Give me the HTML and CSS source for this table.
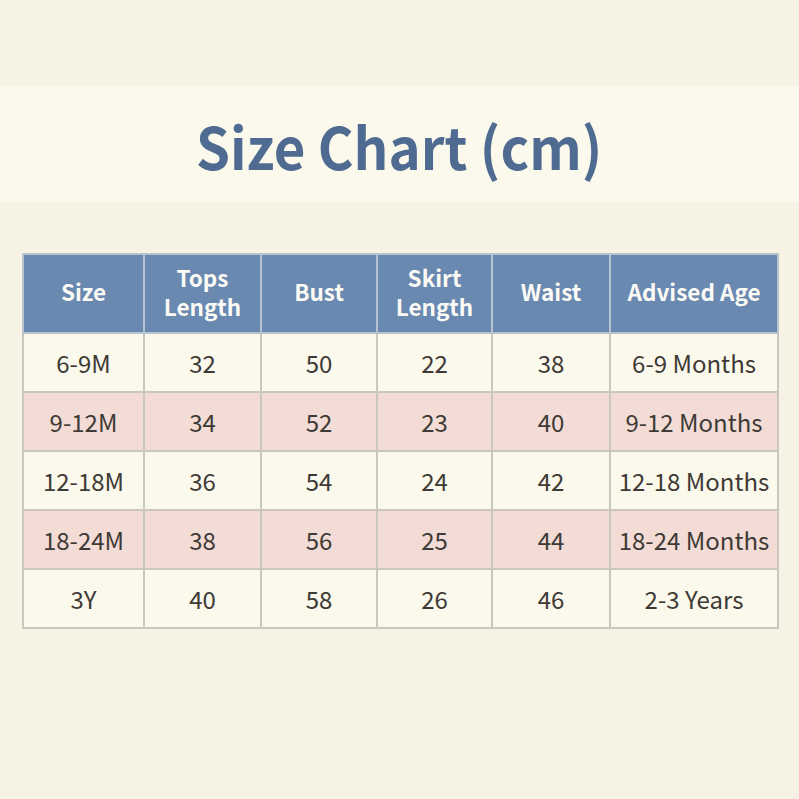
FILE: index.html
```html
<!DOCTYPE html>
<html>
<head>
<meta charset="utf-8">
<link rel="stylesheet" href="styles.css">
</head>
<body>
<div class="page">
  <div class="banner"><h1 class="title">Size Chart (cm)</h1></div>
  <table class="chart">
    <colgroup>
      <col style="width:121px"><col style="width:117px"><col style="width:116px"><col style="width:115px"><col style="width:118px"><col style="width:168px">
    </colgroup>
    <thead>
      <tr><th>Size</th><th>Tops<br>Length</th><th>Bust</th><th>Skirt<br>Length</th><th>Waist</th><th>Advised Age</th></tr>
    </thead>
    <tbody>
      <tr class="light"><td>6-9M</td><td>32</td><td>50</td><td>22</td><td>38</td><td>6-9 Months</td></tr>
      <tr class="pink"><td>9-12M</td><td>34</td><td>52</td><td>23</td><td>40</td><td>9-12 Months</td></tr>
      <tr class="light"><td>12-18M</td><td>36</td><td>54</td><td>24</td><td>42</td><td>12-18 Months</td></tr>
      <tr class="pink"><td>18-24M</td><td>38</td><td>56</td><td>25</td><td>44</td><td>18-24 Months</td></tr>
      <tr class="light"><td>3Y</td><td>40</td><td>58</td><td>26</td><td>46</td><td>2-3 Years</td></tr>
    </tbody>
  </table>
</div>
</body>
</html>
```
FILE: styles.css
```css
html, body {
  margin: 0;
  padding: 0;
  background: #f6f3e4;
}
.page {
  width: 799px;
  height: 799px;
  font-family: "Noto Sans CJK SC", "Source Sans Pro", "Noto Sans", sans-serif;
  overflow: hidden;
}
.banner {
  margin-top: 86px;
  height: 116px;
  background: #fbf8ec;
  display: flex;
  align-items: center;
  justify-content: center;
}
.title {
  margin: 0;
  font-size: 58px;
  font-weight: 700;
  color: #4f6b92;
  line-height: 1;
  position: relative;
  top: 1px;
  transform: scaleX(0.94);
}
.chart {
  margin: 51px 0 0 22px;
  border-collapse: collapse;
  table-layout: fixed;
  width: 755px;
}
.chart th, .chart td {
  border: 2px solid #cac7bf;
  text-align: center;
  padding: 0;
}
.chart th {
  background: #6a89b1;
  color: #fbfaf4;
  font-size: 22.5px;
  font-weight: 700;
  line-height: 29px;
  height: 73px;
  padding-bottom: 4px;
  border-color: #b8c3d0;
}
.chart td {
  height: 57px;
  font-size: 24px;
  color: #3e3a36;
  font-weight: 400;
}
.light td { background: #fbf8ec; }
.pink td { background: #f3dcd5; }
```
